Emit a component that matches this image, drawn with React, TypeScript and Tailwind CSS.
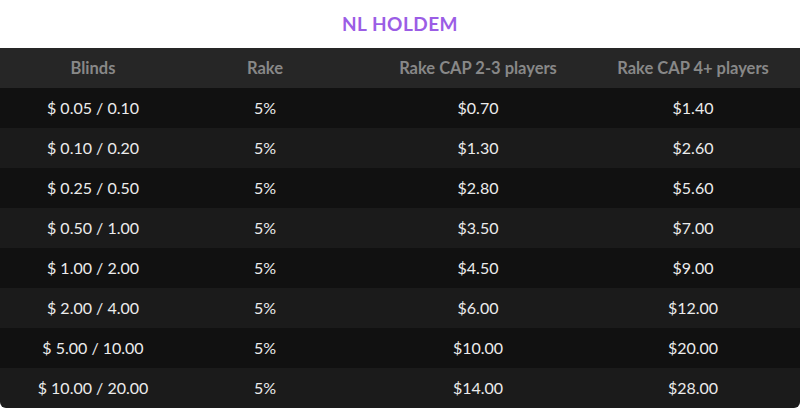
import React from "react"

const rows = [
  ["$ 0.05 / 0.10", "5%", "$0.70", "$1.40"],
  ["$ 0.10 / 0.20", "5%", "$1.30", "$2.60"],
  ["$ 0.25 / 0.50", "5%", "$2.80", "$5.60"],
  ["$ 0.50 / 1.00", "5%", "$3.50", "$7.00"],
  ["$ 1.00 / 2.00", "5%", "$4.50", "$9.00"],
  ["$ 2.00 / 4.00", "5%", "$6.00", "$12.00"],
  ["$ 5.00 / 10.00", "5%", "$10.00", "$20.00"],
  ["$ 10.00 / 20.00", "5%", "$14.00", "$28.00"],
]

const cols = "grid grid-cols-[186px_158px_268px_162px_26px] h-10 items-center text-center"

const App = () => {
  return (
    <div className="w-[800px] h-[408px] bg-white" style={{ fontFamily: "Lato, 'Noto Sans', sans-serif" }}>
      <div className="h-12 flex items-center justify-center text-[19px] font-bold text-[#9b5de5] tracking-wide">
        NL HOLDEM
      </div>
      <div className="rounded-b-md overflow-hidden">
        <div className={`${cols} bg-[#262626] text-[#888888] font-bold text-[16.5px]`}>
          <div>Blinds</div>
          <div>Rake</div>
          <div>Rake CAP 2-3 players</div>
          <div>Rake CAP 4+ players</div>
          <div />
        </div>
        {rows.map((r, i) => (
          <div
            key={i}
            className={`${cols} text-[#ececec] text-base ${i % 2 === 0 ? "bg-[#111111]" : "bg-[#1b1b1b]"}`}
          >
            {r.map((c, j) => (
              <div key={j}>{c}</div>
            ))}
            <div />
          </div>
        ))}
      </div>
    </div>
  )
}

export default App
